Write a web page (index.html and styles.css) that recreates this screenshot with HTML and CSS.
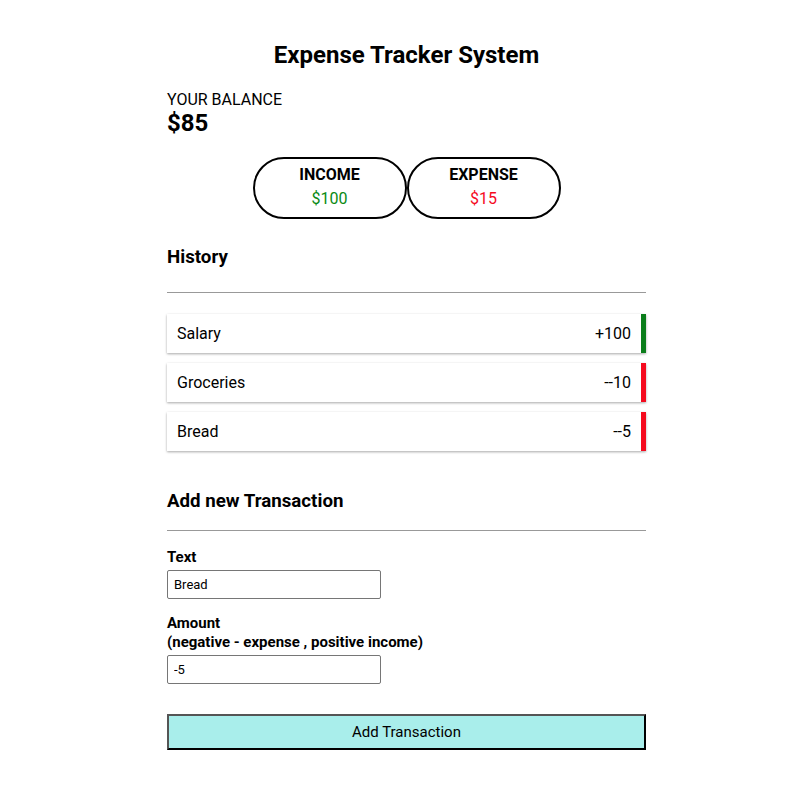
FILE: index.html
```html
<!DOCTYPE html>
<html>
<head>
<meta charset="utf-8">
<link rel="stylesheet" href="styles.css">
</head>
<body>
<div class="container">
  <h2 class="title">Expense Tracker System</h2>
  <h4 class="balance-label">YOUR BALANCE</h4>
  <h1 class="balance">$85</h1>

  <div class="inc-exp">
    <div class="pill">
      <h4>INCOME</h4>
      <p class="money plus">$100</p>
    </div>
    <div class="pill">
      <h4>EXPENSE</h4>
      <p class="money minus">$15</p>
    </div>
  </div>

  <h3 class="section">History</h3>
  <hr class="rule">
  <ul class="list">
    <li class="item plus-item"><span>Salary</span><span>+100</span></li>
    <li class="item minus-item"><span>Groceries</span><span>--10</span></li>
    <li class="item minus-item"><span>Bread</span><span>--5</span></li>
  </ul>

  <h3 class="section section-add">Add new Transaction</h3>
  <hr class="rule rule-add">
  <form class="form">
    <div class="field">
      <label class="lbl" for="text">Text</label>
      <input class="inp" id="text" type="text" value="Bread">
    </div>
    <div class="field">
      <label class="lbl" for="amount">Amount <br>(negative - expense , positive income)</label>
      <input class="inp" id="amount" type="text" value="-5">
    </div>
    <button class="btn" type="button">Add Transaction</button>
  </form>
</div>
</body>
</html>
```
FILE: styles.css
```css
* { box-sizing: border-box; }
body {
  margin: 0;
  background: #fff;
  font-family: Roboto, "Liberation Sans", sans-serif;
  color: #000;
}
.container {
  width: 479px;
  margin-left: 167px;
  padding-top: 40px;
}
.title {
  margin: 0;
  font-size: 24px;
  line-height: 30px;
  font-weight: 700;
  text-align: center;
}
.balance-label {
  margin: 21px 0 0;
  font-size: 16px;
  line-height: 17px;
  font-weight: 400;
}
.balance {
  margin: 0;
  font-size: 24px;
  line-height: 30px;
  font-weight: 700;
}
.inc-exp {
  display: flex;
  justify-content: center;
  gap: 0;
  margin-top: 19px;
}
.pill {
  width: 154px;
  height: 62px;
  border: 2px solid #000;
  border-radius: 31px;
  text-align: center;
  padding-top: 5px;
}
.pill h4 {
  margin: 0;
  font-size: 16px;
  line-height: 21px;
  font-weight: 700;
}
.money {
  margin: 3px 0 0;
  font-size: 16px;
  line-height: 22px;
}
.plus { color: #0a8a14; }
.minus { color: #f50a1e; }
.section {
  margin: 26px 0 0;
  font-size: 18.72px;
  line-height: 24px;
  font-weight: 700;
}
.section-add { margin-top: 38px; }
.rule {
  margin: 23px 0 0;
  border: 0;
  border-top: 1px solid #999;
  height: 0;
}
.rule-add { margin-top: 17px; }
.list {
  list-style: none;
  margin: 21px 0 0;
  padding: 0;
  display: flex;
  flex-direction: column;
  gap: 10px;
}
.item {
  display: flex;
  justify-content: space-between;
  align-items: center;
  height: 39px;
  padding: 0 10px;
  background: #fff;
  font-size: 16px;
  box-shadow: 0 1px 3px rgba(0,0,0,0.14), 0 1px 2px rgba(0,0,0,0.22);
}
.plus-item { border-right: 5px solid #0a7d1a; }
.minus-item { border-right: 5px solid #f50a1e; }
.form {
  margin-top: 17px;
}
.field { margin-bottom: 15px; }
.lbl {
  display: block;
  font-size: 15px;
  line-height: 19px;
  font-weight: 700;
  margin-bottom: 3px;
}
.inp {
  display: block;
  width: 214px;
  height: 29px;
  border: 1px solid #767676;
  border-radius: 2px;
  padding: 0 6px;
  font-family: Roboto, "Liberation Sans", sans-serif;
  font-size: 13px;
  color: #000;
  background: #fff;
}
.btn {
  display: block;
  width: 100%;
  height: 36px;
  margin-top: 30px;
  background: #a9eeeb;
  border: 2px solid;
  border-color: #555 #000 #000 #555;
  font-family: Roboto, "Liberation Sans", sans-serif;
  font-size: 15px;
  color: #000;
  padding: 0;
}
```
